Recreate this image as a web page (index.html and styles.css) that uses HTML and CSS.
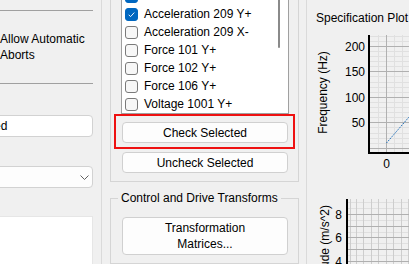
FILE: index.html
```html
<!DOCTYPE html>
<html lang="en">
<head>
    <meta charset="UTF-8">
    <meta name="viewport" content="width=device-width, initial-scale=1.0">
    <title>Test Setup</title>
    <link rel="stylesheet" href="styles.css">
</head>
<body>
    <div class="window">
        <!-- Left settings column (scrolled, clipped on the left) -->
        <aside class="side">
            <div class="side-inner">
                <hr class="rule rule-first">
                <label class="option">
                    <span class="box"></span>
                    <span class="option-text">Allow Automatic Aborts</span>
                </label>
                <hr class="rule">
                <div class="field">Closed</div>
                <div class="combo">
                    <span>Sine</span>
                    <svg class="chevron" width="9" height="5" viewBox="0 0 9 5"><path d="M0.5 0.5L4.5 4.5L8.5 0.5"/></svg>
                </div>
                <div class="sheet"></div>
            </div>
        </aside>

        <!-- Channels and transforms -->
        <section class="middle">
            <fieldset class="group group-channels">
                <div class="channel-list">
                    <label class="channel"><span class="box checked"><svg viewBox="0 0 13 13"><path d="M3.2 6.8L5.4 9L9.8 4.2"/></svg></span>Acceleration 208 Y+</label>
                    <label class="channel"><span class="box checked"><svg viewBox="0 0 13 13"><path d="M3.2 6.8L5.4 9L9.8 4.2"/></svg></span>Acceleration 209 Y+</label>
                    <label class="channel"><span class="box"></span>Acceleration 209 X-</label>
                    <label class="channel"><span class="box"></span>Force 101 Y+</label>
                    <label class="channel"><span class="box"></span>Force 102 Y+</label>
                    <label class="channel"><span class="box"></span>Force 106 Y+</label>
                    <label class="channel"><span class="box"></span>Voltage 1001 Y+</label>
                    <span class="thumb"></span>
                </div>
                <div class="marked">
                    <button class="btn">Check Selected</button>
                </div>
                <button class="btn btn-gap">Uncheck Selected</button>
            </fieldset>

            <fieldset class="group group-transforms">
                <legend>Control and Drive Transforms</legend>
                <button class="btn btn-tall">Transformation<br>Matrices...</button>
            </fieldset>
        </section>

        <!-- Specification plots -->
        <section class="plots">
            <div class="plots-title">Specification Plot</div>

            <svg class="plot" width="102" height="150" viewBox="0 0 102 150">
                <g class="grid-minor">
                    <path d="M62 10.5H102M62 15.5H102M62 25.5H102M62 30.5H102M62 35.5H102M62 40.5H102M62 50.5H102M62 56.5H102M62 61.5H102M62 66.5H102M62 76.5H102M62 81.5H102M62 86.5H102M62 91.5H102M62 101.5H102M62 107.5H102M62 112.5H102M62 117.5H102"/>
                    <path d="M71.5 9V127M87.5 9V127M95.5 9V127"/>
                </g>
                <g class="grid-major">
                    <path d="M62 20.5H102M62 45.5H102M62 71.5H102M62 96.5H102M62 122.5H102"/>
                    <path d="M79.5 9V127"/>
                </g>
                <path class="series" d="M79.5 117L102 91"/>
                <path class="axis" d="M62 9V128M61 127H102"/>
                <text class="tick" x="58" y="21" text-anchor="end">200</text>
                <text class="tick" x="58" y="46" text-anchor="end">150</text>
                <text class="tick" x="58" y="72" text-anchor="end">100</text>
                <text class="tick" x="58" y="97" text-anchor="end">50</text>
                <text class="tick" x="79.5" y="137.5" text-anchor="middle">0</text>
                <text class="tick" x="16" y="66.5" text-anchor="middle" transform="rotate(-90 16 66.5)">Frequency (Hz)</text>
            </svg>

            <svg class="plot" width="102" height="88" viewBox="0 0 102 88">
                <g class="grid-minor">
                    <path d="M40 26.5H102M40 32.5H102M40 44.5H102M40 56.5H102M40 67.5H102M40 79.5H102"/>
                </g>
                <g class="grid-mid">
                    <path d="M43.5 23V88M49.5 23V88M56.5 23V88M64.5 23V88M71.5 23V88M79.5 23V88M86.5 23V88M94.5 23V88M101.5 23V88"/>
                </g>
                <g class="grid-major">
                    <path d="M40 38.5H102M40 50.5H102M40 61.5H102M40 73.5H102M40 85.5H102"/>
                </g>
                <path class="axis" d="M40 23V88"/>
                <text class="tick" x="35" y="39" text-anchor="end">8</text>
                <text class="tick" x="35" y="62" text-anchor="end">6</text>
                <text class="tick" x="35" y="86" text-anchor="end">4</text>
                <text class="tick" x="18" y="29" text-anchor="end" transform="rotate(-90 18 29)">Amplitude (m/s^2)</text>
            </svg>
        </section>
    </div>
</body>
</html>
```

FILE: styles.css
```css
* {
    box-sizing: border-box;
}
html, body {
    margin: 0;
    padding: 0;
}
body {
    background-color: #f0f0f0;
    color: #000;
    font-family: "Liberation Sans", Arial, sans-serif;
    font-size: 12px;
    line-height: 16px;
    overflow: hidden;
}
.window {
    display: flex;
    height: 264px;
}

/* left column */
.side {
    width: 102px;
    flex: none;
    border-right: 1px solid #dadada;
    overflow: hidden;
}
.side-inner {
    margin-left: -40px;
    margin-right: 8px;
}
.rule {
    height: 0;
    margin: 20px 0 0;
    border: 0;
    border-top: 1px solid #a0a0a0;
}
.rule-first {
    margin-top: 10px;
}
.option {
    display: flex;
    align-items: flex-start;
    gap: 7px;
    margin-top: 20px;
    padding-left: 20px;
}
.option .box {
    margin-top: 2px;
}
.field {
    margin-top: 31px;
    height: 22px;
    padding-left: 9px;
    line-height: 20px;
    background: #fff;
    border: 1px solid #d2d2d2;
    border-radius: 4px;
}
.combo {
    display: flex;
    align-items: center;
    justify-content: space-between;
    margin-top: 29px;
    height: 22px;
    padding: 0 3px 0 9px;
    background: #fdfdfd;
    border: 1px solid #d2d2d2;
    border-radius: 4px;
}
.chevron path {
    fill: none;
    stroke: #606060;
    stroke-width: 1;
}
.sheet {
    margin-top: 28px;
    height: 60px;
    background: #fff;
    border: 1px solid #e6e6e6;
}

/* middle column */
.middle {
    width: 205px;
    flex: none;
    padding: 0 7px 0 8px;
    border-right: 1px solid #dadada;
    overflow: hidden;
}
.group {
    min-width: 0;
    margin: 0;
    padding: 0 9px 8px 10px;
    border: 1px solid #d5d5d5;
}
.group-channels {
    margin-top: -30px;
    padding-top: 15px;
}
.group-transforms {
    margin-top: 8px;
}
.group legend {
    margin-left: -3px;
    padding: 0 3px;
    line-height: 16px;
}
.channel-list {
    position: relative;
    background: #fff;
    border: 1px solid #a0a0a0;
}
.channel {
    display: flex;
    align-items: center;
    gap: 6px;
    height: 18px;
    padding-left: 3px;
    white-space: nowrap;
}
.box {
    display: block;
    flex: none;
    width: 13px;
    height: 13px;
    background: #f7f7f7;
    border: 1px solid #7a7a7a;
    border-radius: 3px;
}
.box.checked {
    background: #0067c0;
    border-color: #0067c0;
}
.box svg {
    display: block;
    width: 11px;
    height: 11px;
}
.box svg path {
    fill: none;
    stroke: #fff;
    stroke-width: 1.1;
}
.thumb {
    position: absolute;
    left: 156px;
    top: 0;
    width: 2px;
    height: 61px;
    background: #8a8a8a;
    border-radius: 1px;
}
.btn {
    display: block;
    width: 166px;
    height: 21px;
    margin-left: 1px;
    padding: 0;
    font: inherit;
    color: #000;
    background: #fdfdfd;
    border: 1px solid #d0d0d0;
    border-radius: 4px;
}
.btn-gap {
    margin-top: 9px;
}
.btn-tall {
    height: 38px;
    margin-top: 11px;
}
.marked {
    position: relative;
    margin-top: 8px;
}
.marked::after {
    content: "";
    position: absolute;
    top: -8px;
    right: -6px;
    bottom: -6px;
    left: -7px;
    border: 2px solid #ee1111;
    pointer-events: none;
}

/* right column */
.plots {
    flex: 1;
    overflow: hidden;
}
.plots-title {
    padding: 10px 0 0 9px;
    height: 26px;
    white-space: nowrap;
}
.plot {
    display: block;
}
.grid-minor path {
    fill: none;
    stroke: #e0e0e0;
    stroke-width: 1;
}
.grid-mid path {
    fill: none;
    stroke: #cdcdcd;
    stroke-width: 1;
}
.grid-major path {
    fill: none;
    stroke: #b0b0b0;
    stroke-width: 1;
}
.axis {
    fill: none;
    stroke: #000;
    stroke-width: 2;
}
.series {
    fill: none;
    stroke: #1f6fb8;
    stroke-width: 1;
    stroke-dasharray: 1.5 1;
}
.tick {
    font-family: "Liberation Sans", Arial, sans-serif;
    font-size: 12px;
    fill: #000;
    dominant-baseline: central;
}
```
